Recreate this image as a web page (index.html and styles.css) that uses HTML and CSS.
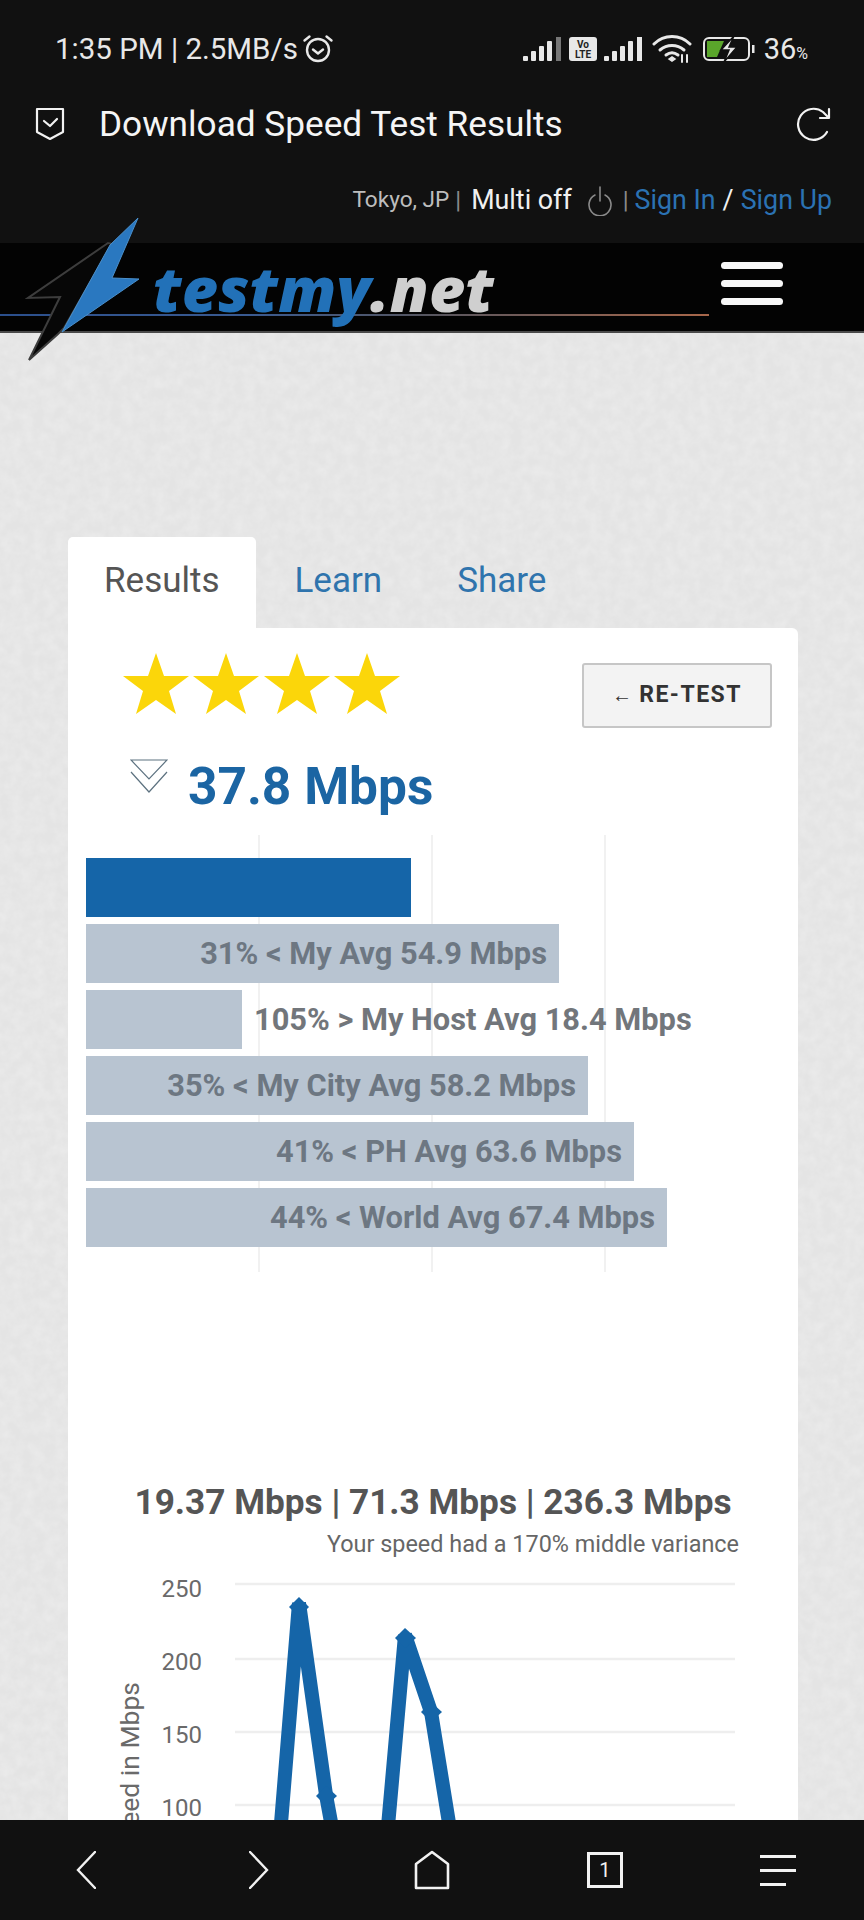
FILE: index.html
```html
<!DOCTYPE html>
<html lang="en">
<head>
<meta charset="utf-8">
<title>Download Speed Test Results</title>
<link rel="stylesheet" href="styles.css">
</head>
<body>
<div class="phone">
  <div class="status">
    <div class="status-left">
      <span>1:35 PM | 2.5MB/s</span>
      <svg class="alarm" width="32" height="32" viewBox="0 0 32 32" fill="none" stroke="#e8e8e8" stroke-width="2.4" stroke-linecap="round" stroke-linejoin="round"><circle cx="16" cy="17" r="11"/><path d="M11 16.5l5 4 5-4"/><path d="M2.5 7.5l5-4M29.500 7.500l-5-4"/></svg>
    </div>
    <div class="status-right">
      <svg class="sig1" width="38" height="25" viewBox="0 0 38 25"><g fill="#e8e8e8"><rect x="0" y="19" width="5" height="5" rx="1"/><rect x="8" y="14" width="5" height="10" rx="1"/><rect x="16" y="9" width="5" height="15" rx="1"/><rect x="24" y="4" width="5" height="20" rx="1"/></g><rect x="33" y="0" width="5" height="24" fill="#777"/></svg>
      <svg class="volte" width="28" height="24" viewBox="0 0 28 24"><rect width="28" height="24" rx="3" fill="#e8e8e8"/><text x="14" y="11" class="volte-text">Vo</text><text x="14" y="21" class="volte-text">LTE</text></svg>
      <svg class="sig2" width="39" height="25" viewBox="0 0 39 25"><g fill="#e8e8e8"><rect x="0" y="19" width="5" height="5" rx="1"/><rect x="8" y="14" width="5" height="10" rx="1"/><rect x="16" y="9" width="5" height="15" rx="1"/><rect x="24" y="4" width="5" height="20" rx="1"/><rect x="33" y="0" width="5" height="24"/></g></svg>
      <svg class="wifi" width="40" height="28" viewBox="0 0 40 28" fill="none" stroke="#e8e8e8" stroke-width="3" stroke-linecap="round"><path d="M2 9C12 -1 28 -1 38 9"/><path d="M8 15c7-6 17-6 24 0"/><path d="M14 20c4-3 8-3 12 0"/><path d="M17 24l3-2 3 2-3 2z" fill="#e8e8e8" stroke-width="1.500"/><path d="M30 20v7M35 20v7" stroke-width="2"/></svg>
      <svg class="battery" width="52" height="26" viewBox="0 0 52 26" fill="none"><rect x="1" y="2" width="45" height="22" rx="5" stroke="#e8e8e8" stroke-width="2"/><path d="M4 5h17l-7 16H4z" fill="#5aa62b"/><path d="M31 0L18 14h8l-5 12 13-15h-8z" fill="#e8e8e8" stroke="#111" stroke-width="1.500"/><rect x="49" y="9" width="2.500" height="8" fill="#e8e8e8"/></svg>
      <span class="pct">36<small>%</small></span>
    </div>
  </div>

  <div class="toolbar">
    <svg class="shield" width="30" height="34" viewBox="0 0 30 34" fill="none" stroke="#f2f2f2" stroke-width="2.200" stroke-linejoin="round" stroke-linecap="round"><path d="M2 2h26v23l-13 7-13-7z"/><path d="M9 14l6 5 7-7"/></svg>
    <span class="page-title">Download Speed Test Results</span>
    <svg class="reload" width="36" height="34" viewBox="0 0 36 34" fill="none" stroke="#f2f2f2" stroke-width="2.200" stroke-linecap="round" stroke-linejoin="round"><path d="M31 25A15.500 15.500 0 1 1 27 5l5 5"/><path d="M33 2v9H24"/></svg>
  </div>

  <div class="webrow">
    <span class="loc">Tokyo, JP</span>
    <span class="pipe">|</span>
    <span class="multi">Multi off</span>
    <svg class="power" width="24" height="30" viewBox="0 0 24 30" fill="none" stroke="#8a8a8a" stroke-width="1.600" stroke-linecap="round"><path d="M7 9A11 11 0 1 0 17 9"/><path d="M12 1v14"/></svg>
    <span class="pipe">|</span>
    <a class="link">Sign In</a>
    <span class="slash">/</span>
    <a class="link">Sign Up</a>
  </div>

  <header class="site-head">
    <div class="rule"></div>
    <svg class="bolt" width="150" height="170" viewBox="0 200 150 170">
      <polygon points="108,243 28,298 60,297 29,360 58,334 64,328 112,244" fill="#070707" stroke="#3d3d3d" stroke-width="2"/>
      <polygon points="138,218 112,278 139,279 62,332 110,245" fill="#2a78c0" stroke="#4a8fcb" stroke-width="1"/>
    </svg>
    <div class="logo"><span class="logo-blue">testmy</span><span class="logo-grey">.net</span></div>
    <div class="burger"><i></i><i></i><i></i></div>
  </header>

  <main class="content">
    <svg class="noise" width="864" height="1490"><filter id="grain"><feTurbulence type="fractalNoise" baseFrequency="0.09" numOctaves="3" seed="4"/><feColorMatrix values="0 0 0 0 1  0 0 0 0 1  0 0 0 0 1  0.4 0 0 0 -0.12"/></filter><rect width="864" height="1490" filter="url(#grain)"/></svg>
    <div class="tabs">
      <div class="tab active">Results</div>
      <div class="tab">Learn</div>
      <div class="tab">Share</div>
    </div>
    <section class="card">
      <div class="card-head">
        <svg class="stars" width="280" height="62" viewBox="0 0 280 62" fill="#fbd60a">
          <polygon points="33,0 41,23 66,23 46,38 53,61 33,47 13,61 20,38 0,23 25,23"/>
          <polygon points="103,0 111,23 136,23 116,38 123,61 103,47 83,61 90,38 70,23 95,23"/>
          <polygon points="174,0 182,23 207,23 187,38 194,61 174,47 154,61 161,38 141,23 166,23"/>
          <polygon points="244,0 252,23 277,23 257,38 264,61 244,47 224,61 231,38 211,23 236,23"/>
        </svg>
        <button class="retest"><span class="arrow">←</span> RE-TEST</button>
      </div>
      <div class="speed">
        <svg class="down" width="38" height="34" viewBox="0 0 38 34" fill="none" stroke="#5d7280" stroke-width="1.200"><path d="M1 1h36L19 20z"/><path d="M1 13l18 20 18-20"/></svg>
        <span class="speed-val">37.8 Mbps</span>
      </div>
      <div class="bars">
        <div class="grid"><i></i><i></i><i></i></div>
        <div class="bar main-bar" style="width:325px"></div>
        <div class="bar" style="width:473px"><span>31% &lt; My Avg 54.9 Mbps</span></div>
        <div class="row"><div class="bar" style="width:156px"></div><span class="out">105% &gt; My Host Avg 18.4 Mbps</span></div>
        <div class="bar" style="width:502px"><span>35% &lt; My City Avg 58.2 Mbps</span></div>
        <div class="bar" style="width:548px"><span>41% &lt; PH Avg 63.6 Mbps</span></div>
        <div class="bar" style="width:581px"><span>44% &lt; World Avg 67.4 Mbps</span></div>
      </div>
      <h2 class="range">19.37 Mbps | 71.3 Mbps | 236.3 Mbps</h2>
      <p class="variance">Your speed had a 170% middle variance</p>
      <svg class="line" width="730" height="290" viewBox="68 1570 730 290">
        <g stroke="#eeeeee" stroke-width="2.500">
          <line x1="235" x2="735" y1="1584" y2="1584"/>
          <line x1="235" x2="735" y1="1659" y2="1659"/>
          <line x1="235" x2="735" y1="1732" y2="1732"/>
          <line x1="235" x2="735" y1="1805" y2="1805"/>
        </g>
        <g class="tick">
          <text x="202" y="1597">250</text>
          <text x="202" y="1670">200</text>
          <text x="202" y="1743">150</text>
          <text x="202" y="1816">100</text>
        </g>
        <text class="axis" transform="translate(139 1682) rotate(-90)" text-anchor="end" x="0" y="0">Speed in Mbps</text>
        <path d="M278 1860L299 1603L326 1795L338 1860M385 1860L405 1635L431 1712L455 1860" fill="none" stroke="#1565a8" stroke-width="14" stroke-linejoin="miter"/>
        <g fill="#1565a8">
          <path d="M299 1597l10 10-10 10-10-10z"/>
          <path d="M405 1628l11 10-11 10-10-10z"/>
          <path d="M326 1786l11 10-11 10-10-10z"/>
          <path d="M431 1702l11 10-11 10-10-10z"/>
        </g>
      </svg>
    </section>
  </main>

  <nav class="bottom">
    <svg width="20" height="38" viewBox="0 0 20 38" fill="none" stroke="#f2f2f2" stroke-width="2.400" stroke-linecap="round"><path d="M19 1L2 19l17 18"/></svg>
    <svg width="20" height="38" viewBox="0 0 20 38" fill="none" stroke="#f2f2f2" stroke-width="2.400" stroke-linecap="round"><path d="M1 1l17 18L1 37"/></svg>
    <svg width="36" height="40" viewBox="0 0 36 40" fill="none" stroke="#f2f2f2" stroke-width="2.600" stroke-linejoin="round"><path d="M18 2L34 14v24H2V14z"/></svg>
    <div class="tabcount">1</div>
    <div class="menu"><i></i><i></i><i class="short"></i></div>
  </nav>
</div>
</body>
</html>
```
FILE: styles.css
```css
* { box-sizing: border-box; }
html, body { margin: 0; padding: 0; }
body { font-family: Roboto, "Liberation Sans", sans-serif; background: #111; }
.phone { width: 864px; height: 1920px; display: flex; flex-direction: column; overflow: hidden; background: #e6e6e6; }

.status, .toolbar, .webrow { background: #111; flex: none; display: flex; align-items: center; }
.status { height: 86px; padding: 12px 56px 0 55px; justify-content: space-between; color: #e8e8e8; font-size: 29.500px; }
.status-left { display: flex; align-items: center; gap: 4px; }
.status-right { display: flex; align-items: center; }
.sig1 { margin-right: 8px; }
.sig2 { margin: 0 9px 0 7px; }
.wifi { margin-right: 11px; }
.battery { margin-right: 9px; }
.volte-text { font-size: 10px; font-weight: 700; fill: #222; text-anchor: middle; }
.pct { font-size: 29px; display: inline-flex; align-items: baseline; }
.pct small { font-size: 16px; }

.toolbar { height: 74px; padding: 2px 32px 0 35px; color: #f5f5f5; }
.page-title { font-size: 35.200px; margin-left: 34px; flex: 1; }

.webrow { height: 83px; padding: 0 32px 4px 0; justify-content: flex-end; font-size: 26.800px; color: #f0f0f0; }
.loc { font-size: 22.600px; color: #bdbdbd; }
.pipe { font-size: 24px; color: #8a8a8a; margin: 0 6px; }
.multi { margin-left: 4px; }
.power { margin: 3px 5px 0 16px; }
.link { color: #2b72b3; }
.slash { margin: 0 7px; }

.site-head { position: relative; z-index: 2; flex: none; height: 90px; background: #030303; border-bottom: 2px solid #4a4a4a; }
.rule { position: absolute; left: 0; top: 71px; width: 709px; height: 2px; background: linear-gradient(90deg, #2b4f8c 0%, #3a5a90 35%, #55555f 60%, #a8674a 100%); }
.bolt { position: absolute; left: 0; top: -43px; }
.logo { position: absolute; left: 153px; top: 2px; font-family: "Open Sans", Roboto, sans-serif; font-size: 62.800px; font-weight: 800; font-style: italic; line-height: 86px; }
.logo-blue { color: #2271b8; }
.logo-grey { color: #cfcfcf; }
.burger { position: absolute; left: 721px; top: 19px; width: 62px; display: flex; flex-direction: column; gap: 11px; }
.burger i { display: block; height: 7px; border-radius: 4px; background: #f7f7f7; }

.content { position: relative; flex: 1; min-height: 0; padding: 204px 66px 0 68px; display: flex; flex-direction: column; overflow: hidden; background: #e4e4e4; }
.noise { position: absolute; left: 0; top: 0; }
.tabs { position: relative; display: flex; gap: 3px; flex: none; }
.tab { height: 91px; padding: 0 36px; font-size: 35px; line-height: 88px; color: #2f74ad; }
.tab.active { background: #fff; color: #555; border-radius: 5px 5px 0 0; }

.card { position: relative; flex: 1; background: #fff; border-radius: 0 6px 0 0; min-height: 0; }
.card-head { display: flex; justify-content: space-between; align-items: flex-start; padding: 25px 26px 0 55px; }
.retest { width: 190px; height: 65px; margin-top: 10px; padding: 0 0 3px; background: #f3f3f3; border: 2px solid #c6c6c6; border-radius: 3px; color: #333; font-family: Roboto, sans-serif; font-size: 23px; font-weight: 700; letter-spacing: 1.500px; }
.arrow { font-size: 20px; letter-spacing: 0; }
.stars { display: block; }

.speed { display: flex; align-items: flex-start; padding-left: 62px; margin-top: 29px; gap: 20px; }
.down { margin-top: 2px; }
.speed-val { font-size: 51.400px; font-weight: 700; line-height: 60px; color: #1b65a3; }

.bars { position: relative; margin: 18px 0 0 18px; height: 437px; padding-top: 23px; display: flex; flex-direction: column; gap: 7px; }
.grid { position: absolute; left: 172px; top: 0; width: 348px; height: 100%; display: flex; justify-content: space-between; }
.grid i { display: block; width: 2px; background: #f1f1f1; }
.bar, .row { position: relative; height: 59px; flex: none; }
.row { display: flex; align-items: center; }
.bar { background: #b8c4d1; display: flex; align-items: center; justify-content: flex-end; padding-right: 12px; }
.main-bar { background: #1565a8; }
.bar span, .out { font-size: 30.800px; font-weight: 700; color: #6d7782; white-space: nowrap; }
.out { position: relative; margin-left: 12px; color: #72767b; }

.range { margin: 210px 0 0; height: 40px; font-size: 35.200px; font-weight: 700; line-height: 40px; text-align: center; color: #555; }
.variance { margin: 7px 0 0; height: 30px; padding-right: 59px; font-size: 23.400px; line-height: 30px; text-align: right; color: #666; }
.line { display: block; margin-top: 11px; }
.tick text { font-family: Roboto, sans-serif; font-size: 24px; fill: #6a6a6a; text-anchor: end; }
.axis { font-family: Roboto, sans-serif; font-size: 26.500px; fill: #6a6a6a; }

.bottom { flex: none; height: 100px; background: #111; display: grid; grid-template-columns: repeat(5, 1fr); align-items: center; justify-items: center; }
.tabcount { width: 36px; height: 36px; border: 3px solid #f2f2f2; color: #f2f2f2; font-size: 20px; line-height: 30px; text-align: center; }
.menu { width: 36px; display: flex; flex-direction: column; gap: 11px; }
.menu i { display: block; height: 3px; background: #f2f2f2; }
.menu i.short { width: 26px; }
```
